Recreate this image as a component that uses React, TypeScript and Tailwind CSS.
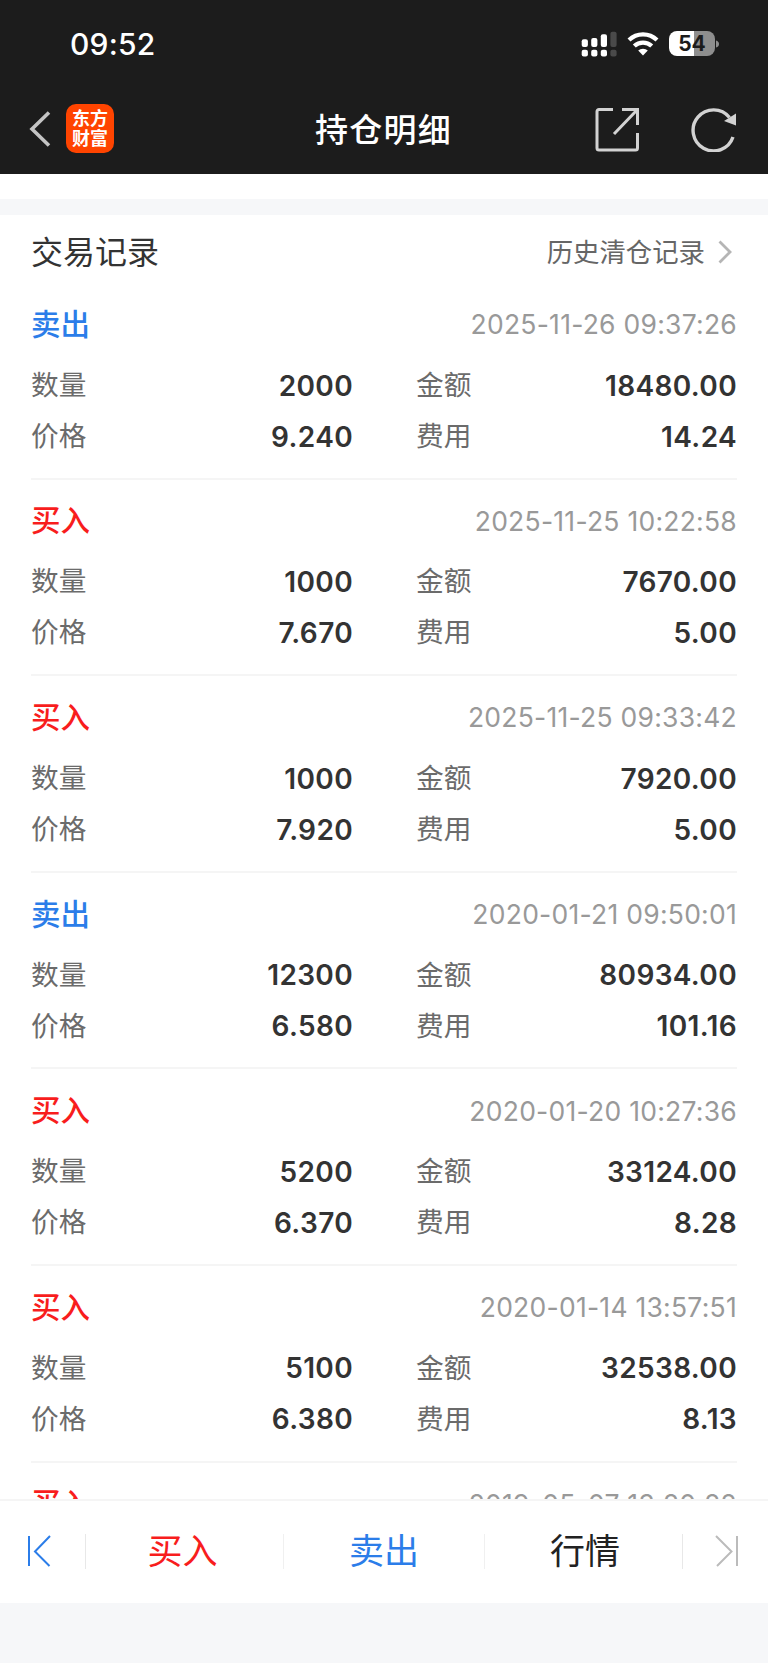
type Trade = {
  type: "buy" | "sell";
  time: string;
  count?: string;
  amount?: string;
  price?: string;
  fee?: string;
};

const trades: Trade[] = [
  { type: "sell", time: "2025-11-26 09:37:26", count: "2000", amount: "18480.00", price: "9.240", fee: "14.24" },
  { type: "buy", time: "2025-11-25 10:22:58", count: "1000", amount: "7670.00", price: "7.670", fee: "5.00" },
  { type: "buy", time: "2025-11-25 09:33:42", count: "1000", amount: "7920.00", price: "7.920", fee: "5.00" },
  { type: "sell", time: "2020-01-21 09:50:01", count: "12300", amount: "80934.00", price: "6.580", fee: "101.16" },
  { type: "buy", time: "2020-01-20 10:27:36", count: "5200", amount: "33124.00", price: "6.370", fee: "8.28" },
  { type: "buy", time: "2020-01-14 13:57:51", count: "5100", amount: "32538.00", price: "6.380", fee: "8.13" },
  { type: "buy", time: "2019-05-07 13:20:22" },
];

function StatusBar() {
  return (
    <div className="flex h-[87px] items-center justify-between pl-[70px] pr-[48px]">
      <span className="text-[30px] font-medium leading-none tracking-[0.2px] text-white">09:52</span>
      <div className="flex h-[26px] items-center">
        <svg width="36" height="26" viewBox="0 0 36 26" fill="#fff">
          <rect x="0.7" y="8.3" width="6.2" height="7.6" rx="2" />
          <rect x="10.2" y="7" width="6.2" height="8.9" rx="2" />
          <rect x="19.8" y="3.3" width="6.2" height="12.6" rx="2" />
          <rect x="29.4" y="0.8" width="6.2" height="15.1" rx="2" fill="#4a4a4a" />
          <rect x="0.7" y="18.8" width="6.2" height="6.7" rx="2" />
          <rect x="10.2" y="18.8" width="6.2" height="6.7" rx="2" />
          <rect x="19.8" y="18.8" width="6.2" height="6.7" rx="2" />
          <rect x="29.4" y="18.8" width="6.2" height="6.7" rx="2" fill="#4a4a4a" />
        </svg>
        <svg className="ml-[10px]" width="32" height="26" viewBox="0 0 32 26" fill="none" stroke="#fff" strokeWidth="4.2">
          <path d="M2 9.1a20 20 0 0 1 28 0" />
          <path d="M7.3 15.1a12.4 12.4 0 0 1 17.4 0" />
          <path d="M16 24.5l-4.8-4.9a6.9 6.9 0 0 1 9.6 0z" fill="#fff" stroke="none" />
        </svg>
        <div className="ml-[10px] flex h-[25px] w-[46px] items-center justify-center rounded-[8px] bg-[linear-gradient(90deg,#fff_54%,#8e8e8e_54%)] text-[21px] font-bold leading-none text-[#1c1c1c]">
          54
        </div>
        <svg className="ml-[1px]" width="4" height="8" viewBox="0 0 4 8">
          <path d="M0 0.5Q3 1.5 3 4T0 7.5z" fill="#8e8e8e" />
        </svg>
      </div>
    </div>
  );
}

function TitleBar() {
  return (
    <div className="grid h-[87px] grid-cols-3 items-center pb-[3px] pl-[29px] pr-[31px]">
      <div className="flex items-center">
        <svg width="22" height="36" viewBox="0 0 22 36" fill="none" stroke="#c4c4c4" strokeWidth="3.6">
          <path d="M20 1.5L3 18l17 16.5" />
        </svg>
        <div className="mb-px ml-[15px] flex h-[49px] w-[48px] flex-col items-center justify-center rounded-[10px] bg-[#ff4400] text-[18px] font-bold leading-[20px] text-white">
          <span>东方</span>
          <span>财富</span>
        </div>
      </div>
      <h1 className="pl-[1px] pt-[2px] text-center text-[33px] font-medium leading-none tracking-[1.2px] text-white">持仓明细</h1>
      <div className="flex items-center justify-end">
        <svg width="44" height="45" viewBox="0 0 44 45" fill="none" stroke="#d2d2d2" strokeWidth="3">
          <path d="M18 2.5H4A2 2 0 0 0 2 4.5V41a2 2 0 0 0 2 2H40.5a2 2 0 0 0 2-2V26" />
          <path d="M27 2.5H42.5V18M42 3L19 27" />
        </svg>
        <svg className="ml-[52px]" width="46" height="46" viewBox="0 0 46 46" fill="none" stroke="#d2d2d2" strokeWidth="3.4">
          <path d="M42 31A20.5 20.5 0 1 1 38.5 11.5" />
          <path d="M45 7.5V19.5L33 15z" fill="#d2d2d2" stroke="none" />
        </svg>
      </div>
    </div>
  );
}

function Field({ label, value }: { label: string; value?: string }) {
  return (
    <div className="flex h-[51px] items-center justify-between">
      <span className="text-[27.7px] text-[#6b6b6b]">{label}</span>
      <span className="text-[28px] font-semibold tracking-[0.35px] text-[#333]">{value}</span>
    </div>
  );
}

function TradeItem({ trade }: { trade: Trade }) {
  const sell = trade.type === "sell";
  return (
    <li className="h-[196.6px] shrink-0 border-b-2 border-[#f5f5f5] pt-[15px]">
      <div className="flex h-[54px] items-center justify-between">
        <span className={sell ? "pb-[2px] text-[29.5px] font-medium text-[#2b7de9]" : "pb-[2px] text-[29.5px] font-medium text-[#f81d1d]"}>
          {sell ? "卖出" : "买入"}
        </span>
        <span className="text-[26.5px] tracking-[0.25px] text-[#999]">{trade.time}</span>
      </div>
      {trade.count && (
        <div className="mt-[8px] grid grid-cols-[322px_321px] justify-between">
          <Field label="数量" value={trade.count} />
          <Field label="金额" value={trade.amount} />
          <Field label="价格" value={trade.price} />
          <Field label="费用" value={trade.fee} />
        </div>
      )}
    </li>
  );
}

function BottomBar() {
  return (
    <nav className="flex h-[104px] shrink-0 items-center border-t-2 border-[#f5f5f5] bg-white pb-[2px] text-[35px] leading-none">
      <div className="flex w-[85px] pl-[27px]">
        <svg width="24" height="32" viewBox="0 0 24 32" fill="none" stroke="#2b7de9" strokeWidth="2">
          <path d="M2 1v30M23 1L8 16.5L22.5 31" />
        </svg>
      </div>
      <div className="h-[35px] w-px bg-[#e8e8e8]" />
      <div className="w-[197px] pr-[4px] text-center text-[#f81d1d]">买入</div>
      <div className="h-[35px] w-px bg-[#f0f0f0]" />
      <div className="w-[200px] text-center text-[#2b7de9]">卖出</div>
      <div className="h-[35px] w-px bg-[#f0f0f0]" />
      <div className="w-[197px] pl-[3px] text-center text-[#222]">行情</div>
      <div className="h-[35px] w-px bg-[#e8e8e8]" />
      <div className="flex flex-1 justify-end pr-[29px]">
        <svg width="24" height="32" viewBox="0 0 24 32" fill="none" stroke="#bbb" strokeWidth="2">
          <path d="M22 1v30M1 1L16.5 16.5L2 31" />
        </svg>
      </div>
    </nav>
  );
}

export default function App() {
  return (
    <div className="flex h-[1663px] w-[768px] flex-col overflow-hidden bg-[#f6f7f9] font-['Inter','Noto_Sans_CJK_SC',sans-serif]">
      <header className="h-[174px] shrink-0 bg-[#1c1c1c]">
        <StatusBar />
        <TitleBar />
      </header>
      <div className="h-[25px] shrink-0 bg-white" />
      <main className="mt-[16px] flex min-h-0 flex-1 flex-col overflow-hidden bg-white pl-[31px] pr-[31px]">
        <div className="flex h-[68px] shrink-0 items-center justify-between pt-[6px]">
          <h2 className="pt-[2px] text-[32px] leading-none text-[#333]">交易记录</h2>
          <div className="flex items-center text-[26.4px] leading-none text-[#666]">
            历史清仓记录
            <svg className="ml-[13px] mr-[5px]" width="14" height="24" viewBox="0 0 14 24" fill="none" stroke="#b5b5b5" strokeWidth="2.8">
              <path d="M1.5 1.5L12 12L1.5 22.5" />
            </svg>
          </div>
        </div>
        <ul className="flex min-h-0 flex-1 flex-col">
          {trades.map((trade) => (
            <TradeItem key={trade.time} trade={trade} />
          ))}
        </ul>
      </main>
      <BottomBar />
      <div className="h-[60px] shrink-0" />
    </div>
  );
}
